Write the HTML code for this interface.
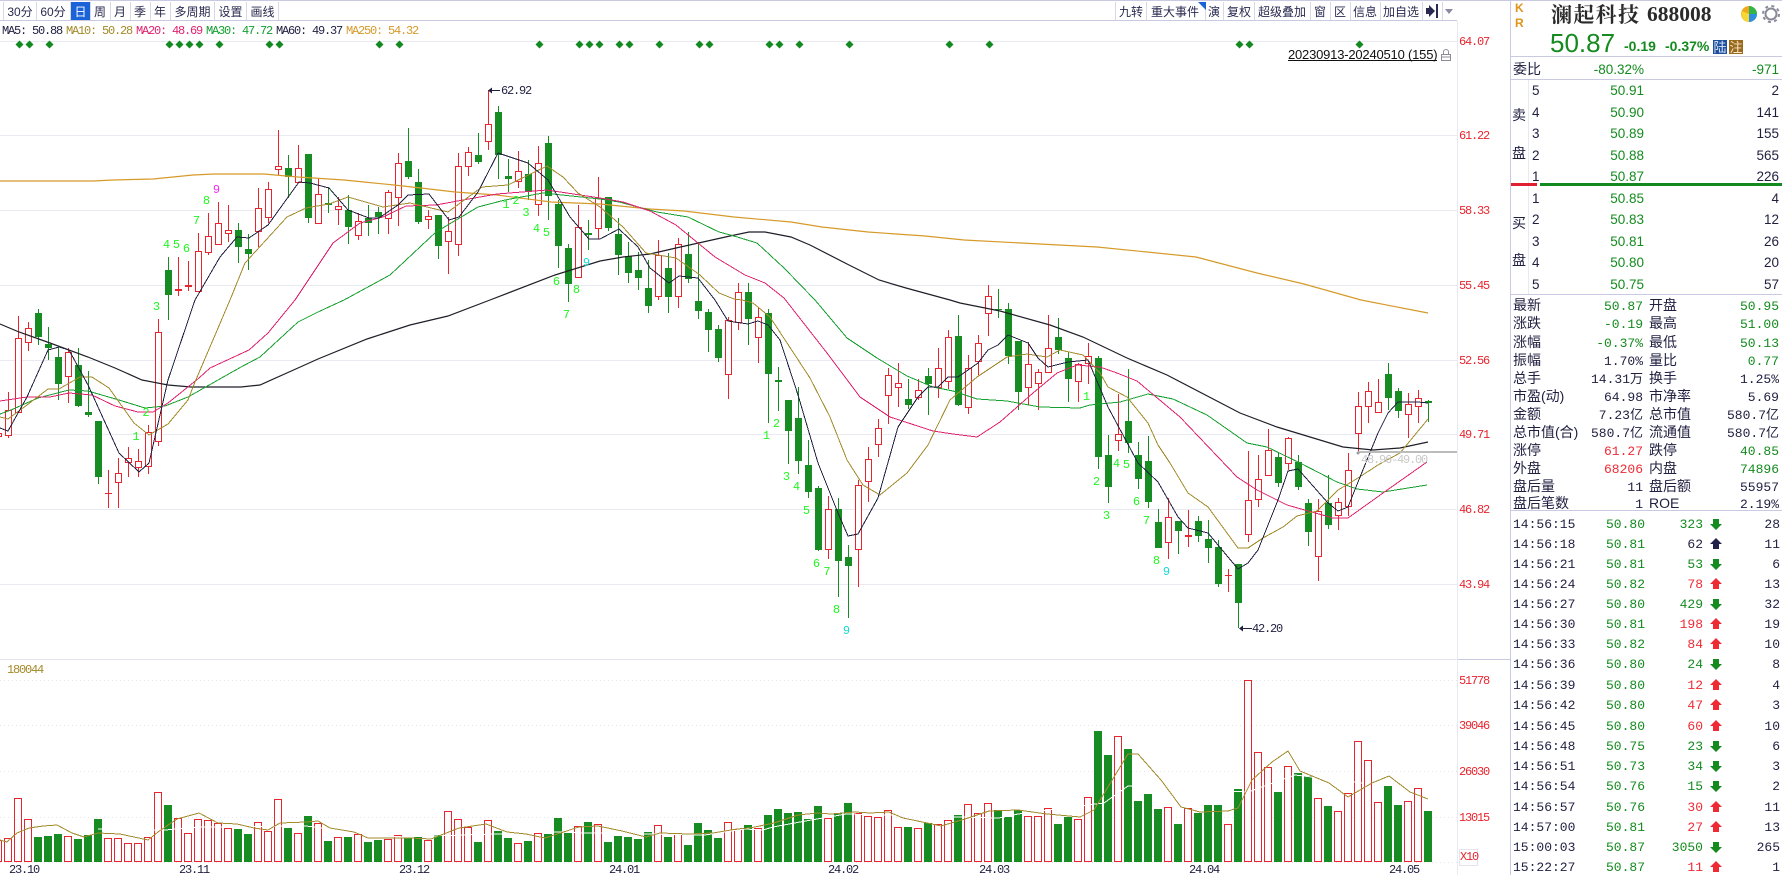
<!DOCTYPE html>
<html lang="zh-CN"><head><meta charset="utf-8"><title>澜起科技 688008</title>
<style>
html,body{margin:0;padding:0;background:#fff;width:1782px;height:875px;overflow:hidden}
svg{display:block}
text{white-space:pre}
.t{font:12px "Liberation Sans","Noto Sans CJK SC",sans-serif;fill:#2a2a50;text-anchor:middle}
.a{font:12px "Liberation Mono",monospace;letter-spacing:-1.2px;fill:#e8252f}
.l{font:12px "Liberation Mono",monospace;letter-spacing:-1.2px}
.d{font:12px "Liberation Mono",monospace;letter-spacing:-1.2px;fill:#1f1f40}
.n{font:12px "Liberation Mono",monospace;fill:#22f522;text-anchor:middle}
.c{font:14px "Liberation Sans","Noto Sans CJK SC",sans-serif;fill:#1f1f40}
.m{font:13px "Liberation Mono","Noto Sans CJK SC",monospace;fill:#1f1f40}
.e{text-anchor:end}
.g{fill:#148a1f}.r{fill:#ee2b35}
.o{font:13.5px "Liberation Sans",sans-serif;fill:#1f1f40}
.p{font:13.5px "Liberation Sans",sans-serif;fill:#148a1f;text-anchor:end}
polyline{fill:none;shape-rendering:crispEdges}
polyline.h{shape-rendering:auto;stroke-width:1.2}
</style></head><body>
<svg width="1782" height="875" viewBox="0 0 1782 875" xmlns="http://www.w3.org/2000/svg">
<defs>
<path id="u" d="M0-6L6 0H3V5H-3V0H-6Z"/>
<path id="w" d="M0 6L6 0H3V-5H-3V0H-6Z"/>
</defs>
<rect width="1782" height="875" fill="#fff"/>

<!-- frame lines -->
<g shape-rendering="crispEdges" fill="none">
<path stroke="#e9e9f2" d="M0 41.5H1457M0 135.5H1457M0 210.5H1457M0 285.5H1457M0 360.5H1457M0 434.5H1457M0 509.5H1457M0 584.5H1457M1457.5 21V875"/>
<path stroke="#e4e4ee" d="M0 659.5H1457"/>
<path stroke="#e4e4ee" stroke-dasharray="1 3" d="M0 680.5H1457M0 725.5H1457M0 771.5H1457M0 817.5H1457M0 862.5H1457"/>
<path stroke="#c9c9e2" d="M0 0.5H1782M0 20.5H1457M1510.5 0V875M1511 56.5H1782M1511 79.5H1782M1511 294.5H1782M1511 510.5H1782M1458 659.5H1510"/>
<path stroke="#e9e9f2" d="M1528.5 80V294"/>
<rect x="1459.5" y="849.5" width="18" height="16" stroke="#e4e4f0"/>
</g>

<!-- toolbar -->
<g shape-rendering="crispEdges">
<rect x="71" y="2" width="19" height="18" fill="#1a62d8"/>
<path fill="none" stroke="#d8d8e8" d="M3.5 2V20M36.5 2V20M70.5 2V20M90.5 2V20M110.5 2V20M130.5 2V20M150.5 2V20M170.5 2V20M214.5 2V20M246.5 2V20M278.5 2V20M1115.5 2V20M1146.5 2V20M1205.5 2V20M1223.5 2V20M1254.5 2V20M1310.5 2V20M1330.5 2V20M1350.5 2V20M1380.5 2V20M1422.5 2V20M1442.5 2V20"/>
</g>
<text class="t" x="20" y="16">30分</text><text class="t" x="53" y="16">60分</text>
<text class="t" x="80.5" y="16" style="fill:#fff">日</text><text class="t" x="100" y="16">周</text><text class="t" x="120" y="16">月</text><text class="t" x="140" y="16">季</text><text class="t" x="160" y="16">年</text><text class="t" x="192.5" y="16">多周期</text><text class="t" x="230.5" y="16">设置</text><text class="t" x="262.5" y="16">画线</text>
<text class="t" x="1131" y="16">九转</text><text class="t" x="1175" y="16">重大事件</text><text class="t" x="1214" y="16">演</text><text class="t" x="1239" y="16">复权</text><text class="t" x="1282" y="16">超级叠加</text><text class="t" x="1320" y="16">窗</text><text class="t" x="1340" y="16">区</text><text class="t" x="1365" y="16">信息</text><text class="t" x="1401" y="16">加自选</text>
<path fill="#1a62d8" d="M1198 2h8v8z"/>
<path fill="#2a2a50" d="M1426 8h3V5l6 6-6 6v-3h-3zM1436 4h2v14h-2z"/>
<path fill="#8a8aa0" d="M1445 9h8l-4 5z"/>

<!-- MA legend -->
<text class="l" x="2" y="34" fill="#1f1f40">MA5: 50.88</text>
<text class="l" x="66" y="34" fill="#a38a2a">MA10: 50.28</text>
<text class="l" x="136" y="34" fill="#e0226e">MA20: 48.69</text>
<text class="l" x="206" y="34" fill="#12a030">MA30: 47.72</text>
<text class="l" x="276" y="34" fill="#1f1f40">MA60: 49.37</text>
<text class="l" x="346" y="34" fill="#d69a2a">MA250: 54.32</text>

<!-- diamonds -->
<path fill="#128a20" d="M15.5 44.5l4-4 4 4-4 4zM25.5 44.5l4-4 4 4-4 4zM45.5 44.5l4-4 4 4-4 4zM165.5 44.5l4-4 4 4-4 4zM175.5 44.5l4-4 4 4-4 4zM185.5 44.5l4-4 4 4-4 4zM195.5 44.5l4-4 4 4-4 4zM215.5 44.5l4-4 4 4-4 4zM265.5 44.5l4-4 4 4-4 4zM275.5 44.5l4-4 4 4-4 4zM375.5 44.5l4-4 4 4-4 4zM395.5 44.5l4-4 4 4-4 4zM535.5 44.5l4-4 4 4-4 4zM575.5 44.5l4-4 4 4-4 4zM585.5 44.5l4-4 4 4-4 4zM595.5 44.5l4-4 4 4-4 4zM615.5 44.5l4-4 4 4-4 4zM625.5 44.5l4-4 4 4-4 4zM655.5 44.5l4-4 4 4-4 4zM695.5 44.5l4-4 4 4-4 4zM705.5 44.5l4-4 4 4-4 4zM765.5 44.5l4-4 4 4-4 4zM775.5 44.5l4-4 4 4-4 4zM795.5 44.5l4-4 4 4-4 4zM845.5 44.5l4-4 4 4-4 4zM945.5 44.5l4-4 4 4-4 4zM985.5 44.5l4-4 4 4-4 4zM1235.5 44.5l4-4 4 4-4 4zM1245.5 44.5l4-4 4 4-4 4zM1355.5 44.5l4-4 4 4-4 4z"/>

<!-- date range -->
<text x="1288" y="59" style="font:13px 'Liberation Sans',sans-serif;letter-spacing:-.2px" fill="#111">20230913-20240510 (155)</text>
<path shape-rendering="crispEdges" stroke="#111" d="M1288 60.5H1437"/>
<path fill="none" stroke="#8d8d9a" d="M1441.5 54.5h9v6h-9zM1443.5 54v-2a2.5 2.5 0 0 1 5 0v2M1441.5 57h9"/>

<!-- candles -->
<g shape-rendering="crispEdges">
<path stroke="#e8252f" fill="none" d="M8.5 392V438M18.5 316V413M28.5 322V351M68.5 348V403M108.5 470V508M118.5 458V508M128.5 447V477M138.5 449V477M148.5 425V474M158.5 319V446M178.5 257V296M188.5 261V291M198.5 233V292M208.5 213V255M218.5 202V244M228.5 205V242M258.5 188V247M268.5 182V223M278.5 130V175M298.5 145V182M318.5 179V223M338.5 197V225M358.5 213V240M388.5 190V234M398.5 153V226M428.5 210V229M448.5 217V274M458.5 153V256M468.5 147V176M488.5 90V150M518.5 151V188M538.5 146V216M578.5 205V277M598.5 177V239M658.5 240V300M678.5 238V308M728.5 317V399M738.5 283V330M758.5 308V363M828.5 496V559M858.5 480V587M868.5 447V502M878.5 419V457M888.5 368V424M898.5 363V407M918.5 379V400M938.5 348V398M948.5 330V389M968.5 355V414M978.5 335V375M988.5 285V336M1028.5 342V405M1038.5 369V410M1048.5 315V372M1078.5 363V402M1088.5 343V384M1118.5 394V451M1168.5 498V559M1188.5 510V547M1228.5 569V592M1248.5 451V542M1258.5 455V507M1268.5 429V475M1288.5 437V470M1318.5 499V581M1338.5 498V530M1348.5 453V516M1358.5 392V453M1368.5 382V423M1378.5 379V412M1408.5 393V438M1418.5 390V423"/>
<path stroke="#178c22" fill="none" d="M38.5 309V345M48.5 327V360M58.5 347V400M78.5 348V407M88.5 371V417M98.5 421V484M168.5 257V320M238.5 223V263M248.5 234V270M288.5 155V198M308.5 154V223M328.5 187V213M348.5 195V244M368.5 205V236M378.5 207V234M408.5 128V179M418.5 169V224M438.5 215V259M478.5 133V164M498.5 106V179M508.5 159V192M528.5 160V200M548.5 136V220M558.5 200V268M568.5 244V302M588.5 220V250M608.5 197V231M618.5 218V275M628.5 242V283M638.5 252V290M648.5 260V313M668.5 253V313M688.5 232V283M698.5 242V319M708.5 309V352M718.5 325V362M748.5 283V345M768.5 309V423M778.5 367V411M788.5 400V464M798.5 387V474M808.5 440V498M818.5 486V551M838.5 498V597M848.5 545V618M908.5 379V409M928.5 368V415M958.5 315V406M998.5 289V318M1008.5 303V364M1018.5 341V410M1058.5 318V354M1068.5 352V402M1098.5 356V469M1108.5 435V503M1128.5 369V453M1138.5 442V489M1148.5 436V508M1158.5 509V548M1178.5 521V554M1198.5 516V542M1208.5 520V563M1218.5 540V587M1238.5 564V628M1278.5 453V487M1298.5 455V490M1308.5 499V546M1328.5 475V529M1388.5 363V410M1398.5 388V418M1428.5 400V422"/>
<path stroke="#e8252f" stroke-width="1" fill="#fff" d="M-4.5 433.5h6v3h-6zM5.5 410.5h6V435.5h-6zM15.5 338.5h6V412.5h-6zM25.5 328.5h6V342.5h-6zM65.5 352.5h6V376.5h-6zM115.5 473.5h6V482.5h-6zM125.5 458.5h6V462.5h-6zM135.5 461.5h6V467.5h-6zM145.5 432.5h6V466.5h-6zM155.5 332.5h6V441.5h-6zM195.5 251.5h6V291.5h-6zM205.5 236.5h6V252.5h-6zM215.5 223.5h6V244.5h-6zM225.5 230.5h6V233.5h-6zM255.5 208.5h6V231.5h-6zM265.5 189.5h6V217.5h-6zM275.5 166.5h6V169.5h-6zM295.5 168.5h6V182.5h-6zM315.5 194.5h6V223.5h-6zM335.5 206.5h6V209.5h-6zM355.5 221.5h6V235.5h-6zM385.5 192.5h6V218.5h-6zM395.5 163.5h6V197.5h-6zM425.5 216.5h6V219.5h-6zM445.5 231.5h6V241.5h-6zM455.5 166.5h6V244.5h-6zM465.5 152.5h6V166.5h-6zM485.5 124.5h6V141.5h-6zM515.5 171.5h6V181.5h-6zM535.5 163.5h6V204.5h-6zM575.5 227.5h6V277.5h-6zM595.5 198.5h6V228.5h-6zM655.5 255.5h6V296.5h-6zM675.5 244.5h6V296.5h-6zM725.5 320.5h6V374.5h-6zM735.5 292.5h6V322.5h-6zM755.5 317.5h6V337.5h-6zM825.5 509.5h6V549.5h-6zM855.5 485.5h6V549.5h-6zM865.5 459.5h6V481.5h-6zM875.5 428.5h6V444.5h-6zM885.5 375.5h6V395.5h-6zM895.5 383.5h6V387.5h-6zM915.5 390.5h6V397.5h-6zM935.5 368.5h6V387.5h-6zM945.5 337.5h6V381.5h-6zM965.5 368.5h6V407.5h-6zM975.5 343.5h6V361.5h-6zM985.5 296.5h6V313.5h-6zM1025.5 364.5h6V387.5h-6zM1035.5 372.5h6V383.5h-6zM1045.5 348.5h6V372.5h-6zM1075.5 364.5h6V381.5h-6zM1085.5 356.5h6V363.5h-6zM1115.5 434.5h6V440.5h-6zM1165.5 517.5h6V542.5h-6zM1245.5 500.5h6V534.5h-6zM1255.5 479.5h6V499.5h-6zM1265.5 450.5h6V475.5h-6zM1285.5 438.5h6V463.5h-6zM1315.5 511.5h6V556.5h-6zM1335.5 502.5h6V515.5h-6zM1345.5 470.5h6V506.5h-6zM1355.5 406.5h6V433.5h-6zM1365.5 391.5h6V406.5h-6zM1375.5 402.5h6V412.5h-6zM1405.5 404.5h6V414.5h-6zM1415.5 398.5h6V406.5h-6z"/>
<path fill="#e8252f" d="M105 493h7v1h-7zM175 289h7v2h-7zM185 285h7v2h-7zM1185 535h7v2h-7zM1225 575h7v1h-7z"/>
<path fill="#178c22" d="M35 313h7V337h-7zM45 344h7V348h-7zM55 357h7V384h-7zM75 365h7V406h-7zM85 412h7V415h-7zM95 421h7V477h-7zM165 270h7V295h-7zM235 230h7V247h-7zM245 249h7V254h-7zM285 168h7V177h-7zM305 154h7V218h-7zM325 203h7V205h-7zM345 210h7V227h-7zM365 218h7V223h-7zM375 212h7V217h-7zM405 161h7V177h-7zM415 182h7V222h-7zM435 215h7V246h-7zM475 155h7V162h-7zM495 112h7V155h-7zM505 176h7V179h-7zM525 174h7V192h-7zM545 143h7V196h-7zM555 204h7V246h-7zM565 248h7V284h-7zM585 233h7V235h-7zM605 197h7V228h-7zM615 234h7V255h-7zM625 256h7V273h-7zM635 270h7V278h-7zM645 288h7V306h-7zM665 268h7V297h-7zM685 254h7V279h-7zM695 301h7V311h-7zM705 312h7V330h-7zM715 329h7V358h-7zM745 292h7V319h-7zM765 313h7V374h-7zM775 380h7V382h-7zM785 400h7V431h-7zM795 418h7V461h-7zM805 465h7V492h-7zM815 488h7V550h-7zM835 509h7V561h-7zM845 557h7V566h-7zM905 399h7V405h-7zM925 376h7V384h-7zM955 336h7V405h-7zM995 309h7V310h-7zM1005 309h7V356h-7zM1015 341h7V392h-7zM1055 337h7V350h-7zM1065 358h7V379h-7zM1095 358h7V457h-7zM1105 455h7V487h-7zM1125 421h7V443h-7zM1135 455h7V479h-7zM1145 461h7V502h-7zM1155 522h7V548h-7zM1175 521h7V531h-7zM1195 521h7V536h-7zM1205 539h7V548h-7zM1215 547h7V584h-7zM1235 564h7V603h-7zM1275 457h7V483h-7zM1295 462h7V487h-7zM1305 503h7V532h-7zM1325 503h7V525h-7zM1385 374h7V398h-7zM1395 391h7V411h-7zM1425 401h7V403h-7z"/>
</g>

<!-- moving averages -->
<polyline class="h" stroke="#d69a2a" points="0,181 93,181 113,180 153,179 193,175 214,174 264,174 298,177 344,180 364,182 394,185 421,188 455,192 497,195 551,202 600,204 650,209 684,211 734,217 791,222 822,227 868,232 925,236 964,240 1021,243 1097,247 1147,252 1196,257 1257,273 1304,284 1361,300 1428,313"/>
<polyline class="h" stroke="#1f1f28" points="0,324 19,332 50,343 88,357 115,368 142,380 168,385 191,387 241,387 260,385 298,368 318,359 367,339 410,325 448,316 490,300 555,275 600,261 623,257 650,254 676,248 730,236 749,232 765,232 791,237 810,245 849,265 879,280 906,288 950,300 960,303 1000,311 1050,325 1083,337 1127,358 1167,375 1240,413 1277,427 1343,447 1373,450 1400,448 1428,442"/>
<polyline stroke="#15a02f" points="0,414 11,410 38,398 69,390 88,391 119,400 145,408 165,406 188,397 241,367 260,357 298,322 318,312 344,300 390,275 436,232 478,207 505,200 543,193 600,199 619,202 657,212 688,217 719,232 734,236 757,243 784,268 815,300 847,338 877,358 907,376 933,387 953,391 977,399 1007,401 1040,407 1080,408 1090,405 1120,402 1148,394 1173,399 1207,415 1247,443 1267,447 1300,463 1337,482 1357,489 1383,492 1427,485"/>
<polyline stroke="#e0226e" points="0,401 27,397 50,397 69,393 92,395 115,406 138,412 153,412 168,403 199,378 210,368 249,350 268,333 295,300 333,243 360,223 383,217 406,206 436,205 463,200 497,194 547,190 600,198 623,202 650,211 676,225 715,257 745,275 765,283 784,298 827,353 860,397 890,417 933,431 953,434 977,437 1000,422 1033,393 1057,373 1077,365 1100,367 1117,373 1137,381 1180,417 1237,477 1257,490 1287,505 1333,518 1348,518 1383,493 1427,462"/>
<polyline stroke="#a38a2a" points="0,417 8,419 27,405 48,389 59,389 80,377 92,377 109,388 134,423 149,435 168,424 188,400 195,382 230,300 245,263 287,217 306,208 329,204 348,197 383,207 410,203 448,212 482,187 508,185 547,166 563,177 578,193 600,207 623,227 646,253 676,258 700,275 719,293 734,299 742,300 753,303 770,317 810,378 830,417 847,460 863,485 880,495 907,473 928,445 950,400 977,377 1007,357 1027,354 1047,357 1060,350 1083,355 1100,373 1108,387 1127,397 1148,423 1158,445 1170,463 1188,493 1208,507 1238,548 1248,548 1263,538 1283,527 1297,516 1317,511 1338,490 1358,478 1378,465 1400,453 1428,419"/>
<polyline stroke="#1f1f40" points="0,428 8,431 27,397 48,350 59,347 69,350 88,385 119,453 139,472 149,463 168,380 195,300 220,257 237,237 249,238 268,225 299,182 310,183 329,188 348,210 369,218 379,218 398,205 408,195 429,194 449,220 459,217 478,192 498,153 528,163 548,180 570,217 589,239 600,239 619,229 638,247 650,268 669,283 679,276 698,278 715,300 728,321 748,324 758,321 768,325 780,340 798,395 818,463 838,513 848,536 858,534 878,498 898,427 918,397 928,387 938,387 948,377 958,377 978,363 988,350 998,345 1008,335 1028,343 1038,358 1048,367 1068,362 1088,360 1108,407 1138,463 1158,482 1178,517 1188,528 1208,533 1238,569 1248,563 1258,550 1278,500 1288,471 1298,469 1328,503 1338,511 1348,507 1358,482 1378,433 1388,413 1398,402 1418,402 1428,403"/>

<!-- annotation -->
<path fill="none" stroke="#1f1f40" d="M489 90.5H500M1240 628.5H1252"/>
<path fill="#1f1f40" d="M488 90.5l4-3v6zM1239 628.5l4-3v6z"/>
<text class="d" x="501" y="94">62.92</text>
<text class="d" x="1252" y="632">42.20</text>
<path shape-rendering="crispEdges" stroke="#bcbcbc" stroke-width="2" d="M1358 452H1457"/>
<circle cx="1358" cy="453" r="1.5" fill="#9a9aa8"/>
<text class="l" x="1361" y="463" fill="#c8c8c8">48.96-49.00</text>

<!-- magic nine -->
<text class="n" x="166.5" y="248">4</text><text class="n" x="176.5" y="248">5</text><text class="n" x="186.5" y="252">6</text><text class="n" x="196.5" y="224">7</text><text class="n" x="206.5" y="204">8</text><text class="n" x="216.5" y="193" style="fill:#f22af2">9</text>
<text class="n" x="506" y="208">1</text><text class="n" x="516" y="204">2</text><text class="n" x="526" y="216">3</text><text class="n" x="536.5" y="232">4</text><text class="n" x="546.5" y="236">5</text><text class="n" x="556.5" y="285">6</text><text class="n" x="566.5" y="318">7</text><text class="n" x="576.5" y="293">8</text><text class="n" x="586.5" y="266" style="fill:#14d8d8">9</text>
<text class="n" x="136" y="440">1</text><text class="n" x="146" y="416">2</text><text class="n" x="156.5" y="310">3</text>
<text class="n" x="766.5" y="439">1</text><text class="n" x="776.5" y="427">2</text><text class="n" x="786.5" y="480">3</text><text class="n" x="796.5" y="490">4</text><text class="n" x="806.5" y="514">5</text><text class="n" x="816.5" y="567">6</text><text class="n" x="827" y="575">7</text><text class="n" x="836.5" y="613">8</text><text class="n" x="846.5" y="634" style="fill:#14d8d8">9</text>
<text class="n" x="1086.5" y="400">1</text><text class="n" x="1096.5" y="485">2</text><text class="n" x="1106.5" y="519">3</text><text class="n" x="1116.5" y="467">4</text><text class="n" x="1126.5" y="468">5</text><text class="n" x="1136.5" y="505">6</text><text class="n" x="1146.5" y="524">7</text><text class="n" x="1156.5" y="564">8</text><text class="n" x="1166.5" y="575" style="fill:#14d8d8">9</text>

<!-- price axis -->
<text class="a" x="1459" y="45">64.07</text><text class="a" x="1459" y="139">61.22</text><text class="a" x="1459" y="214">58.33</text><text class="a" x="1459" y="289">55.45</text><text class="a" x="1459" y="364">52.56</text><text class="a" x="1459" y="438">49.71</text><text class="a" x="1459" y="513">46.82</text><text class="a" x="1459" y="588">43.94</text>
<text class="a" x="1459" y="684">51778</text><text class="a" x="1459" y="729">39046</text><text class="a" x="1459" y="775">26030</text><text class="a" x="1459" y="821">13015</text><text class="a" x="1460" y="860">X10</text>

<!-- volume -->
<text class="l" x="7" y="673" fill="#a38a2a">180044</text>
<g shape-rendering="crispEdges">
<path fill="#178c22" d="M34 837h8V862h-8zM44 836h8V862h-8zM54 834h8V862h-8zM74 839h8V862h-8zM84 835h8V862h-8zM94 819h8V862h-8zM164 805h8V862h-8zM234 829h8V862h-8zM244 834h8V862h-8zM284 828h8V862h-8zM304 816h8V862h-8zM324 841h8V862h-8zM344 837h8V862h-8zM364 842h8V862h-8zM374 840h8V862h-8zM404 838h8V862h-8zM414 836h8V862h-8zM434 835h8V862h-8zM474 842h8V862h-8zM494 831h8V862h-8zM504 838h8V862h-8zM524 841h8V862h-8zM544 834h8V862h-8zM554 818h8V862h-8zM564 833h8V862h-8zM584 822h8V862h-8zM604 842h8V862h-8zM614 836h8V862h-8zM624 837h8V862h-8zM634 839h8V862h-8zM644 832h8V862h-8zM664 837h8V862h-8zM684 845h8V862h-8zM694 823h8V862h-8zM704 830h8V862h-8zM714 838h8V862h-8zM744 825h8V862h-8zM764 815h8V862h-8zM774 809h8V862h-8zM784 813h8V862h-8zM794 812h8V862h-8zM804 819h8V862h-8zM814 806h8V862h-8zM834 813h8V862h-8zM844 803h8V862h-8zM904 827h8V862h-8zM924 823h8V862h-8zM954 815h8V862h-8zM994 810h8V862h-8zM1004 817h8V862h-8zM1014 810h8V862h-8zM1054 824h8V862h-8zM1064 817h8V862h-8zM1094 731h8V862h-8zM1104 755h8V862h-8zM1124 749h8V862h-8zM1134 801h8V862h-8zM1144 794h8V862h-8zM1154 809h8V862h-8zM1174 824h8V862h-8zM1194 813h8V862h-8zM1204 805h8V862h-8zM1214 805h8V862h-8zM1234 789h8V862h-8zM1274 792h8V862h-8zM1294 773h8V862h-8zM1304 776h8V862h-8zM1324 806h8V862h-8zM1384 786h8V862h-8zM1394 805h8V862h-8zM1424 811h8V862h-8z"/>
<path fill="#fff" stroke="#e8252f" d="M-5.5 840.5h7V861.5h-7zM4.5 838.5h7V861.5h-7zM14.5 798.5h7V861.5h-7zM24.5 819.5h7V861.5h-7zM64.5 836.5h7V861.5h-7zM104.5 838.5h7V861.5h-7zM114.5 838.5h7V861.5h-7zM124.5 843.5h7V861.5h-7zM134.5 843.5h7V861.5h-7zM144.5 837.5h7V861.5h-7zM154.5 792.5h7V861.5h-7zM174.5 818.5h7V861.5h-7zM184.5 833.5h7V861.5h-7zM194.5 819.5h7V861.5h-7zM204.5 820.5h7V861.5h-7zM214.5 823.5h7V861.5h-7zM224.5 828.5h7V861.5h-7zM254.5 822.5h7V861.5h-7zM264.5 831.5h7V861.5h-7zM274.5 799.5h7V861.5h-7zM294.5 833.5h7V861.5h-7zM314.5 823.5h7V861.5h-7zM334.5 837.5h7V861.5h-7zM354.5 834.5h7V861.5h-7zM384.5 839.5h7V861.5h-7zM394.5 835.5h7V861.5h-7zM424.5 840.5h7V861.5h-7zM444.5 811.5h7V861.5h-7zM454.5 819.5h7V861.5h-7zM464.5 827.5h7V861.5h-7zM484.5 820.5h7V861.5h-7zM514.5 843.5h7V861.5h-7zM534.5 833.5h7V861.5h-7zM574.5 826.5h7V861.5h-7zM594.5 824.5h7V861.5h-7zM654.5 825.5h7V861.5h-7zM674.5 834.5h7V861.5h-7zM724.5 822.5h7V861.5h-7zM734.5 829.5h7V861.5h-7zM754.5 828.5h7V861.5h-7zM824.5 818.5h7V861.5h-7zM854.5 813.5h7V861.5h-7zM864.5 816.5h7V861.5h-7zM874.5 817.5h7V861.5h-7zM884.5 810.5h7V861.5h-7zM894.5 827.5h7V861.5h-7zM914.5 828.5h7V861.5h-7zM934.5 824.5h7V861.5h-7zM944.5 820.5h7V861.5h-7zM964.5 804.5h7V861.5h-7zM974.5 813.5h7V861.5h-7zM984.5 803.5h7V861.5h-7zM1024.5 816.5h7V861.5h-7zM1034.5 816.5h7V861.5h-7zM1044.5 808.5h7V861.5h-7zM1074.5 819.5h7V861.5h-7zM1084.5 797.5h7V861.5h-7zM1114.5 736.5h7V861.5h-7zM1164.5 807.5h7V861.5h-7zM1184.5 808.5h7V861.5h-7zM1224.5 824.5h7V861.5h-7zM1244.5 680.5h7V861.5h-7zM1254.5 752.5h7V861.5h-7zM1264.5 767.5h7V861.5h-7zM1284.5 766.5h7V861.5h-7zM1314.5 798.5h7V861.5h-7zM1334.5 811.5h7V861.5h-7zM1344.5 793.5h7V861.5h-7zM1354.5 741.5h7V861.5h-7zM1364.5 760.5h7V861.5h-7zM1374.5 802.5h7V861.5h-7zM1404.5 801.5h7V861.5h-7zM1414.5 788.5h7V861.5h-7z"/>
</g>
<polyline stroke="#fff" points="98,829 165,830 200,827 306,826 400,837 558,832 588,833 705,835 745,829 763,830 773,827 800,822 846,814 999,818 1018,814 1104,803 1128,786 1248,792 1295,775 1362,783"/>
<polyline stroke="#a38a2a" points="0,840 7,842 17,833 29,828 43,826 57,825 72,833 84,837 98,833 120,834 148,840 158,832 177,819 199,813 218,823 237,824 254,828 268,830 280,823 306,822 318,821 330,828 354,832 368,838 411,838 431,839 459,828 486,824 507,832 526,834 545,838 579,827 598,826 622,831 646,837 660,833 689,834 713,833 737,829 750,828 774,823 798,815 817,813 831,814 855,812 870,813 889,812 903,818 932,824 941,826 965,819 989,811 1018,810 1047,814 1080,817 1094,810 1128,754 1138,754 1161,780 1181,807 1200,812 1228,811 1238,808 1252,780 1272,762 1288,751 1300,771 1329,783 1348,797 1372,783 1389,776 1410,792 1428,799"/>

<!-- dates -->
<text class="d" x="9" y="873">23.10</text><text class="d" x="179" y="873">23.11</text><text class="d" x="399" y="873">23.12</text><text class="d" x="609" y="873">24.01</text><text class="d" x="828" y="873">24.02</text><text class="d" x="979" y="873">24.03</text><text class="d" x="1189" y="873">24.04</text><text class="d" x="1389" y="873">24.05</text>

<!-- right header -->
<text x="1515" y="12" style="font:bold 12px 'Liberation Sans',sans-serif" fill="#e0941a">K</text>
<text x="1515" y="27" style="font:bold 12px 'Liberation Sans',sans-serif" fill="#e0941a">R</text>
<text x="1551" y="22" style="font:bold 21px 'Noto Serif CJK SC','Liberation Serif',serif" fill="#2a2a2a" textLength="88" lengthAdjust="spacing">澜起科技</text>
<text x="1647" y="21" style="font:bold 21.5px 'Liberation Serif',serif" fill="#2a2a2a">688008</text>
<circle cx="1749" cy="14" r="8" fill="#f2a81c"/>
<path fill="#2fb54a" d="M1749 14V6a8 8 0 0 1 8 8z"/>
<path fill="#2f8de0" d="M1749 14h8a8 8 0 0 1-8 8z"/>
<path fill="#f5d836" d="M1749 14v8a8 8 0 0 1-7-11z"/>
<circle cx="1771" cy="14" r="5.5" fill="none" stroke="#8a8a98" stroke-width="2"/>
<circle cx="1771" cy="14" r="8" fill="none" stroke="#8a8a98" stroke-width="2" stroke-dasharray="3 3.3"/>
<text x="1550" y="52" style="font:26px 'Liberation Sans',sans-serif" fill="#148a1f">50.87</text>
<text x="1624" y="51" style="font:bold 14px 'Liberation Sans',sans-serif" fill="#148a1f">-0.19</text>
<text x="1665" y="51" style="font:bold 14px 'Liberation Sans',sans-serif" fill="#148a1f">-0.37%</text>
<rect x="1713" y="40" width="14" height="14" fill="#1d4f9f"/><rect x="1729" y="40" width="14" height="14" fill="#9a6a1c"/>
<text x="1720" y="52" text-anchor="middle" style="font:13px 'Noto Sans CJK SC',sans-serif" fill="#dfe6f5">陆</text>
<text x="1736" y="52" text-anchor="middle" style="font:13px 'Noto Sans CJK SC',sans-serif" fill="#f5e6c8">注</text>

<!-- order book -->
<text class="c" x="1513" y="74">委比</text>
<text class="p" x="1644" y="74">-80.32%</text><text class="p" x="1779" y="74">-971</text>
<text class="c" x="1512" y="120">卖</text><text class="c" x="1512" y="158">盘</text><text class="c" x="1512" y="228">买</text><text class="c" x="1512" y="265">盘</text>
<text class="o" x="1532" y="95">5</text><text class="p" x="1644" y="95">50.91</text><text class="o e" x="1779" y="95">2</text>
<text class="o" x="1532" y="117">4</text><text class="p" x="1644" y="117">50.90</text><text class="o e" x="1779" y="117">141</text>
<text class="o" x="1532" y="138">3</text><text class="p" x="1644" y="138">50.89</text><text class="o e" x="1779" y="138">155</text>
<text class="o" x="1532" y="160">2</text><text class="p" x="1644" y="160">50.88</text><text class="o e" x="1779" y="160">565</text>
<text class="o" x="1532" y="181">1</text><text class="p" x="1644" y="181">50.87</text><text class="o e" x="1779" y="181">226</text>
<g shape-rendering="crispEdges"><rect x="1511" y="183" width="26" height="3" fill="#e02030"/><rect x="1540" y="183" width="242" height="3" fill="#128a20"/></g>
<text class="o" x="1532" y="203">1</text><text class="p" x="1644" y="203">50.85</text><text class="o e" x="1779" y="203">4</text>
<text class="o" x="1532" y="224">2</text><text class="p" x="1644" y="224">50.83</text><text class="o e" x="1779" y="224">12</text>
<text class="o" x="1532" y="246">3</text><text class="p" x="1644" y="246">50.81</text><text class="o e" x="1779" y="246">26</text>
<text class="o" x="1532" y="267">4</text><text class="p" x="1644" y="267">50.80</text><text class="o e" x="1779" y="267">20</text>
<text class="o" x="1532" y="289">5</text><text class="p" x="1644" y="289">50.75</text><text class="o e" x="1779" y="289">57</text>

<!-- stats -->
<text class="c" x="1513" y="310">最新</text><text class="m e g" x="1643" y="310">50.87</text><text class="c" x="1649" y="310">开盘</text><text class="m e g" x="1779" y="310">50.95</text>
<text class="c" x="1513" y="328">涨跌</text><text class="m e g" x="1643" y="328">-0.19</text><text class="c" x="1649" y="328">最高</text><text class="m e g" x="1779" y="328">51.00</text>
<text class="c" x="1513" y="347">涨幅</text><text class="m e g" x="1643" y="347">-0.37%</text><text class="c" x="1649" y="347">最低</text><text class="m e g" x="1779" y="347">50.13</text>
<text class="c" x="1513" y="365">振幅</text><text class="m e" x="1643" y="365">1.70%</text><text class="c" x="1649" y="365">量比</text><text class="m e g" x="1779" y="365">0.77</text>
<text class="c" x="1513" y="383">总手</text><text class="m e" x="1643" y="383">14.31万</text><text class="c" x="1649" y="383">换手</text><text class="m e" x="1779" y="383">1.25%</text>
<text class="c" x="1513" y="401">市盈(动)</text><text class="m e" x="1643" y="401">64.98</text><text class="c" x="1649" y="401">市净率</text><text class="m e" x="1779" y="401">5.69</text>
<text class="c" x="1513" y="419">金额</text><text class="m e" x="1643" y="419">7.23亿</text><text class="c" x="1649" y="419">总市值</text><text class="m e" x="1779" y="419">580.7亿</text>
<text class="c" x="1513" y="437">总市值(合)</text><text class="m e" x="1643" y="437">580.7亿</text><text class="c" x="1649" y="437">流通值</text><text class="m e" x="1779" y="437">580.7亿</text>
<text class="c" x="1513" y="455">涨停</text><text class="m e r" x="1643" y="455">61.27</text><text class="c" x="1649" y="455">跌停</text><text class="m e g" x="1779" y="455">40.85</text>
<text class="c" x="1513" y="473">外盘</text><text class="m e r" x="1643" y="473">68206</text><text class="c" x="1649" y="473">内盘</text><text class="m e g" x="1779" y="473">74896</text>
<text class="c" x="1513" y="491">盘后量</text><text class="m e" x="1643" y="491">11</text><text class="c" x="1649" y="491">盘后额</text><text class="m e" x="1779" y="491">55957</text>
<text class="c" x="1513" y="508">盘后笔数</text><text class="m e" x="1643" y="508">1</text><text class="c" x="1649" y="508">ROE</text><text class="m e" x="1779" y="508">2.19%</text>

<!-- ticks -->
<g>
<text class="m" x="1513" y="528">14:56:15</text><text class="m g" x="1606" y="528">50.80</text><text class="m e g" x="1703" y="528">323</text><use href="#w" x="1716" y="524" fill="#148a1f"/><text class="m e" x="1780" y="528">28</text>
<text class="m" x="1513" y="548">14:56:18</text><text class="m g" x="1606" y="548">50.81</text><text class="m e" x="1703" y="548">62</text><use href="#u" x="1716" y="544" fill="#22224a"/><text class="m e" x="1780" y="548">11</text>
<text class="m" x="1513" y="568">14:56:21</text><text class="m g" x="1606" y="568">50.81</text><text class="m e g" x="1703" y="568">53</text><use href="#w" x="1716" y="564" fill="#148a1f"/><text class="m e" x="1780" y="568">6</text>
<text class="m" x="1513" y="588">14:56:24</text><text class="m g" x="1606" y="588">50.82</text><text class="m e r" x="1703" y="588">78</text><use href="#u" x="1716" y="584" fill="#ee2b35"/><text class="m e" x="1780" y="588">13</text>
<text class="m" x="1513" y="608">14:56:27</text><text class="m g" x="1606" y="608">50.80</text><text class="m e g" x="1703" y="608">429</text><use href="#w" x="1716" y="604" fill="#148a1f"/><text class="m e" x="1780" y="608">32</text>
<text class="m" x="1513" y="628">14:56:30</text><text class="m g" x="1606" y="628">50.81</text><text class="m e r" x="1703" y="628">198</text><use href="#u" x="1716" y="624" fill="#ee2b35"/><text class="m e" x="1780" y="628">19</text>
<text class="m" x="1513" y="648">14:56:33</text><text class="m g" x="1606" y="648">50.82</text><text class="m e r" x="1703" y="648">84</text><use href="#u" x="1716" y="644" fill="#ee2b35"/><text class="m e" x="1780" y="648">10</text>
<text class="m" x="1513" y="668">14:56:36</text><text class="m g" x="1606" y="668">50.80</text><text class="m e g" x="1703" y="668">24</text><use href="#w" x="1716" y="664" fill="#148a1f"/><text class="m e" x="1780" y="668">8</text>
<text class="m" x="1513" y="689">14:56:39</text><text class="m g" x="1606" y="689">50.80</text><text class="m e r" x="1703" y="689">12</text><use href="#u" x="1716" y="685" fill="#ee2b35"/><text class="m e" x="1780" y="689">4</text>
<text class="m" x="1513" y="709">14:56:42</text><text class="m g" x="1606" y="709">50.80</text><text class="m e r" x="1703" y="709">47</text><use href="#u" x="1716" y="705" fill="#ee2b35"/><text class="m e" x="1780" y="709">3</text>
<text class="m" x="1513" y="730">14:56:45</text><text class="m g" x="1606" y="730">50.80</text><text class="m e r" x="1703" y="730">60</text><use href="#u" x="1716" y="726" fill="#ee2b35"/><text class="m e" x="1780" y="730">10</text>
<text class="m" x="1513" y="750">14:56:48</text><text class="m g" x="1606" y="750">50.75</text><text class="m e g" x="1703" y="750">23</text><use href="#w" x="1716" y="746" fill="#148a1f"/><text class="m e" x="1780" y="750">6</text>
<text class="m" x="1513" y="770">14:56:51</text><text class="m g" x="1606" y="770">50.73</text><text class="m e g" x="1703" y="770">34</text><use href="#w" x="1716" y="766" fill="#148a1f"/><text class="m e" x="1780" y="770">3</text>
<text class="m" x="1513" y="790">14:56:54</text><text class="m g" x="1606" y="790">50.76</text><text class="m e g" x="1703" y="790">15</text><use href="#w" x="1716" y="786" fill="#148a1f"/><text class="m e" x="1780" y="790">2</text>
<text class="m" x="1513" y="811">14:56:57</text><text class="m g" x="1606" y="811">50.76</text><text class="m e r" x="1703" y="811">30</text><use href="#u" x="1716" y="807" fill="#ee2b35"/><text class="m e" x="1780" y="811">11</text>
<text class="m" x="1513" y="831">14:57:00</text><text class="m g" x="1606" y="831">50.81</text><text class="m e r" x="1703" y="831">27</text><use href="#u" x="1716" y="827" fill="#ee2b35"/><text class="m e" x="1780" y="831">13</text>
<text class="m" x="1513" y="851">15:00:03</text><text class="m g" x="1606" y="851">50.87</text><text class="m e g" x="1703" y="851">3050</text><use href="#w" x="1716" y="847" fill="#148a1f"/><text class="m e" x="1780" y="851">265</text>
<text class="m" x="1513" y="871">15:22:27</text><text class="m g" x="1606" y="871">50.87</text><text class="m e r" x="1703" y="871">11</text><use href="#u" x="1716" y="867" fill="#ee2b35"/><text class="m e" x="1780" y="871">1</text>
</g>
</svg>
</body></html>
